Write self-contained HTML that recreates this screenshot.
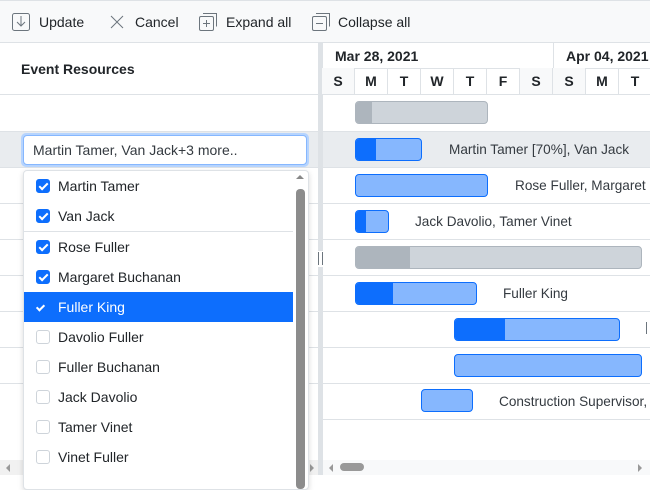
<!DOCTYPE html>
<html><head><style>
*{box-sizing:border-box;margin:0;padding:0}
body{width:650px;height:475px;overflow:hidden;background:#fff;font-family:"Segoe UI","Liberation Sans",sans-serif;font-size:13px;color:#212529;position:relative}
.a{position:absolute}
.tb{left:0;top:0;width:650px;height:43px;background:#f8f9fa;border-top:1px solid #dee2e6;border-bottom:1px solid #dee2e6}
.tb span{position:absolute;top:13px;font-size:14px;color:#212529}
.hl{background:#dee2e6}
.row{left:0;width:650px;height:1px;background:#dee2e6}
.day{top:68px;width:33px;height:27px;font-weight:bold;font-size:14px;text-align:center;line-height:27px;border-right:1px solid #dee2e6}
.bar{height:23px;border-radius:4px;border:1px solid #0d6efd;background:#86b7fe;overflow:hidden}
.bar i{display:block;height:100%;background:#0d6efd}
.gb{border-color:#adb5bd;background:#ced4da}
.gb i{background:#adb5bd}
.lbl{font-size:13.6px;color:#343a40;white-space:nowrap}
.it{left:24px;width:269px;height:30px;font-size:14px;line-height:30px;padding-left:34px;color:#212529}
.cb{position:absolute;left:12px;top:8px;width:14px;height:14px;border-radius:3px;border:1px solid #ced4da;background:#fff}
.cb.on{background:#0d6efd;border-color:#0d6efd}
.cb.on:after{content:"";position:absolute;left:4px;top:1px;width:3px;height:7px;border:solid #fff;border-width:0 2px 2px 0;transform:rotate(45deg)}
</style></head><body>
<div class="a tb">
<svg class="a" style="left:12px;top:12px" width="18" height="18" viewBox="0 0 18 18" fill="none" stroke="#6c757d" stroke-width="1"><rect x="0.5" y="0.5" width="17" height="17" rx="2"/><path d="M9 3v10M5 9l4 4 4-4"/></svg>
<span style="left:39px">Update</span>
<svg class="a" style="left:110px;top:14px" width="14" height="14" viewBox="0 0 14 14" stroke="#6c757d" stroke-width="1"><path d="M1 1l12 12M13 1L1 13"/></svg>
<span style="left:135px">Cancel</span>
<svg class="a" style="left:199px;top:12px" width="18" height="19" viewBox="0 0 18 19" fill="none" stroke="#6c757d"><rect x="0.5" y="3.5" width="14" height="14" rx="1.5"/><path d="M4 0.5h13.5v13"/><path d="M7.5 7v7M4 10.5h7"/></svg>
<span style="left:226px">Expand all</span>
<svg class="a" style="left:312px;top:12px" width="18" height="19" viewBox="0 0 18 19" fill="none" stroke="#6c757d"><rect x="0.5" y="3.5" width="14" height="14" rx="1.5"/><path d="M4 0.5h13.5v13"/><path d="M4 10.5h7"/></svg>
<span style="left:338px">Collapse all</span>
</div>
<div class="a" style="left:21px;top:61px;font-weight:bold;font-size:14px">Event Resources</div>
<div class="a" style="left:318px;top:43px;width:5px;height:432px;background:#dee2e6"></div>
<div class="a" style="left:317px;top:251px;width:8px;height:16px;background:#fff"></div>
<div class="a" style="left:318px;top:252px;width:1px;height:13px;background:#6c757d"></div>
<div class="a" style="left:322px;top:252px;width:1px;height:13px;background:#6c757d"></div>
<div class="a" style="left:335px;top:48px;font-weight:bold;font-size:14px">Mar 28, 2021</div>
<div class="a" style="left:566px;top:48px;font-weight:bold;font-size:14px">Apr 04, 2021</div>
<div class="a hl" style="left:553px;top:43px;width:1px;height:25px"></div>
<div class="a hl" style="left:323px;top:68px;width:327px;height:1px"></div>
<div class="a day" style="left:322px;background:#f8f9fa">S</div>
<div class="a day" style="left:355px">M</div>
<div class="a day" style="left:388px">T</div>
<div class="a day" style="left:421px">W</div>
<div class="a day" style="left:454px">T</div>
<div class="a day" style="left:487px">F</div>
<div class="a day" style="left:520px;background:#f8f9fa">S</div>
<div class="a day" style="left:553px;background:#f8f9fa">S</div>
<div class="a day" style="left:586px">M</div>
<div class="a day" style="left:619px">T</div>
<div class="a" style="left:0;top:131px;width:318px;height:36px;background:#e9ecef"></div>
<div class="a" style="left:323px;top:131px;width:327px;height:36px;background:#e9ecef"></div>
<div class="a row" style="top:94px"></div>
<div class="a row" style="top:131px"></div>
<div class="a row" style="top:167px"></div>
<div class="a row" style="top:203px"></div>
<div class="a row" style="top:239px"></div>
<div class="a row" style="top:275px"></div>
<div class="a row" style="top:311px"></div>
<div class="a row" style="top:347px"></div>
<div class="a row" style="top:383px"></div>
<div class="a row" style="top:419px;left:323px;width:327px"></div>
<div class="a bar gb" style="left:355px;top:101px;width:133px"><i style="width:16px"></i></div>
<div class="a bar" style="left:355px;top:138px;width:67px"><i style="width:20px"></i></div>
<div class="a lbl" style="left:449px;top:142px">Martin Tamer [70%], Van Jack</div>
<div class="a bar" style="left:355px;top:174px;width:133px"></div>
<div class="a lbl" style="left:515px;top:178px">Rose Fuller, Margaret</div>
<div class="a bar" style="left:355px;top:210px;width:34px"><i style="width:10px"></i></div>
<div class="a lbl" style="left:415px;top:214px">Jack Davolio, Tamer Vinet</div>
<div class="a bar gb" style="left:355px;top:246px;width:287px"><i style="width:54px"></i></div>
<div class="a bar" style="left:355px;top:282px;width:122px"><i style="width:37px"></i></div>
<div class="a lbl" style="left:503px;top:286px">Fuller King</div>
<div class="a bar" style="left:454px;top:318px;width:166px"><i style="width:50px"></i></div>
<div class="a bar" style="left:454px;top:354px;width:188px"></div>
<div class="a bar" style="left:421px;top:389px;width:52px"></div>
<div class="a lbl" style="left:499px;top:394px">Construction Supervisor,</div>
<div class="a" style="left:646px;top:322px;width:1px;height:12px;background:#6c757d"></div>
<div class="a" style="left:0;top:460px;width:318px;height:15px;background:#f1f1f1"></div>
<div class="a" style="left:323px;top:460px;width:327px;height:15px;background:#f8f9fa"></div>
<div class="a" style="left:6px;top:464px;border:4px solid transparent;border-right-color:#999;border-left:0"></div>
<div class="a" style="left:310px;top:464px;border:4px solid transparent;border-left-color:#999;border-right:0"></div>
<div class="a" style="left:329px;top:464px;border:4px solid transparent;border-right-color:#999;border-left:0"></div>
<div class="a" style="left:340px;top:463px;width:24px;height:8px;border-radius:4px;background:#999"></div>
<div class="a" style="left:638px;top:464px;border:4px solid transparent;border-left-color:#999;border-right:0"></div>
<div class="a" style="left:21px;top:133px;width:288px;height:34px;border:3px solid #b6d4fe;border-radius:5px"></div>
<div class="a" style="left:23px;top:135px;width:284px;height:30px;border:1px solid #86b7fe;border-radius:4px;background:#fff;padding-left:9px;line-height:28px;font-size:14px;color:#343a40">Martin Tamer, Van Jack+3 more..</div>
<div class="a" style="left:23px;top:170px;width:286px;height:320px;background:#fff;border:1px solid #dee2e6;border-radius:4px;box-shadow:0 2px 6px rgba(0,0,0,.15)"></div>
<div class="a it" style="top:171px"><span class="cb on"></span>Martin Tamer</div>
<div class="a it" style="top:201px"><span class="cb on"></span>Van Jack</div>
<div class="a" style="left:24px;top:231px;width:269px;height:1px;background:#dee2e6"></div>
<div class="a it" style="top:232px"><span class="cb on"></span>Rose Fuller</div>
<div class="a it" style="top:262px"><span class="cb on"></span>Margaret Buchanan</div>
<div class="a it" style="top:292px;background:#0d6efd;color:#fff"><span style="position:absolute;left:14px;top:11px;width:5px;height:8px;border:solid #fff;border-width:0 2px 2px 0;transform:rotate(45deg)"></span>Fuller King</div>
<div class="a it" style="top:322px"><span class="cb"></span>Davolio Fuller</div>
<div class="a it" style="top:352px"><span class="cb"></span>Fuller Buchanan</div>
<div class="a it" style="top:382px"><span class="cb"></span>Jack Davolio</div>
<div class="a it" style="top:412px"><span class="cb"></span>Tamer Vinet</div>
<div class="a it" style="top:442px"><span class="cb"></span>Vinet Fuller</div>
<div class="a" style="left:296px;top:175px;border:4px solid transparent;border-bottom-color:#888;border-top:0"></div>
<div class="a" style="left:296px;top:189px;width:9px;height:300px;border-radius:4px;background:#8c8c8c"></div>
</body></html>
